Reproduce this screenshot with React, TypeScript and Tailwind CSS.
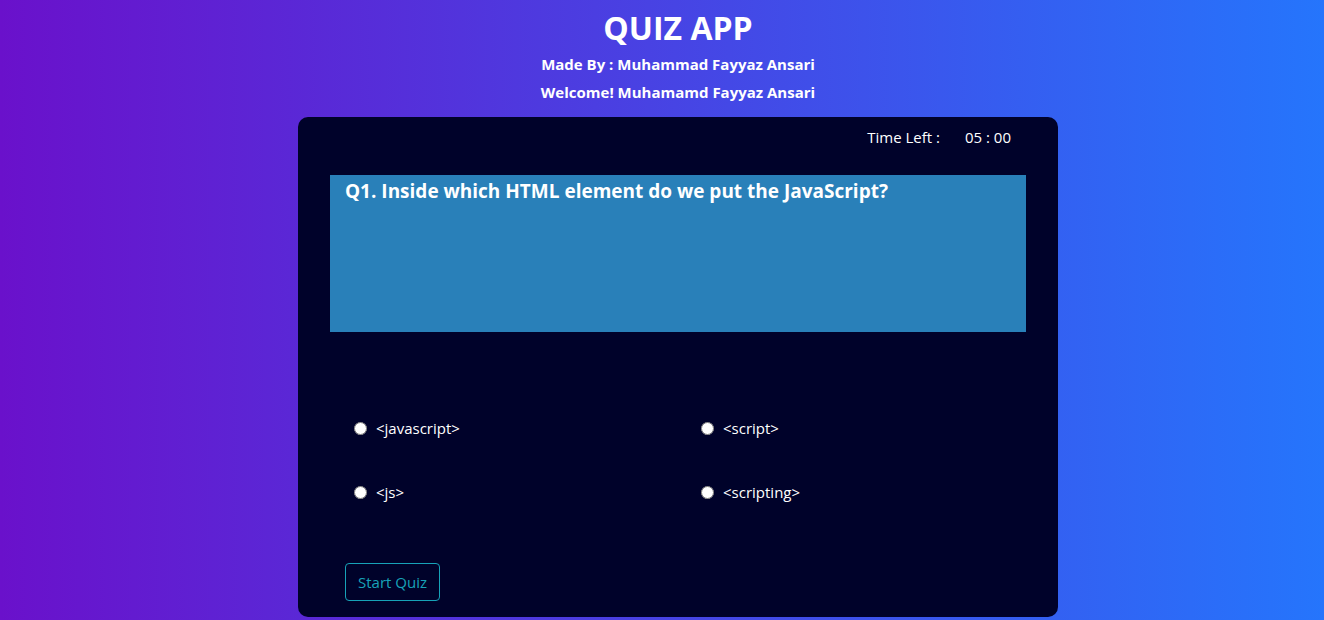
import { useState } from "react";

const OPTIONS = ["<javascript>", "<script>", "<js>", "<scripting>"];

export default function App() {
  const [picked, setPicked] = useState<string | null>(null);

  return (
    <div
      className="min-h-screen bg-linear-to-r/srgb from-[#6a11cb] to-[#2575fc] pl-8 text-white"
      style={{ fontFamily: '"Open Sans", "Noto Sans", sans-serif' }}
    >
      {/* header */}
      <div className="pt-[8px] text-center">
        <h1 className="text-[32px] font-bold leading-[40px]">QUIZ APP</h1>
        <p className="mt-[4px] text-[15px] font-bold leading-[24px]">Made By : Muhammad Fayyaz Ansari</p>
        <p className="mt-[4px] text-[15px] font-bold leading-[24px]">Welcome! Muhamamd Fayyaz Ansari</p>
      </div>

      {/* quiz card */}
      <div className="mx-auto mt-[13px] w-[760px] rounded-[10px] bg-[#00022a] px-8 pt-[10px] pb-[16px]">
        <div className="flex justify-end pr-[15px] text-[15px] leading-[20px]">
          <span>Time Left :</span>
          <span className="ml-[25px]">05 : 00</span>
        </div>

        <div className="mt-[28px] h-[157px] bg-[#2980b9] px-[15px] pt-[4px]">
          <h2 className="text-[19px] font-bold leading-[24px]">
            Q1. Inside which HTML element do we put the JavaScript?
          </h2>
        </div>

        <div className="mt-[84px] grid grid-cols-[347px_1fr] gap-y-[40px] pl-[24px]">
          {OPTIONS.map((o) => (
            <label key={o} className="flex h-[24px] items-center text-[15px]">
              <input
                type="radio"
                name="answer"
                checked={picked === o}
                onChange={() => setPicked(o)}
                className="m-0 h-[13px] w-[13px]"
              />
              <span className="ml-[9px]">{o}</span>
            </label>
          ))}
        </div>

        <button className="mt-[59px] ml-[15px] h-[38px] rounded-[4px] border border-[#17a2b8] px-[12px] text-[15px] text-[#17a2b8]">
          Start Quiz
        </button>
      </div>
    </div>
  );
}
